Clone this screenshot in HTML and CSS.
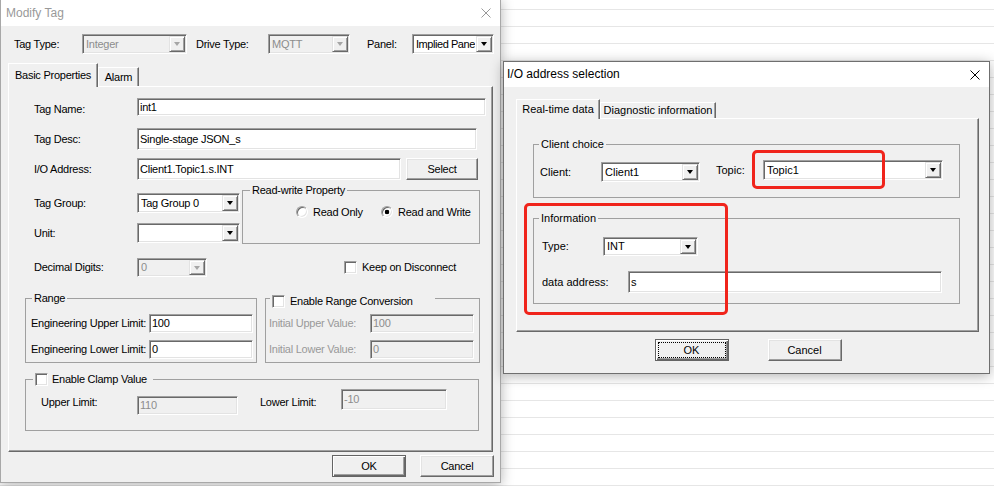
FILE: index.html
```html
<!DOCTYPE html>
<html lang="en">
<head>
    <meta charset="UTF-8">
    <meta name="viewport" content="width=device-width, initial-scale=1.0">
    <title>Modify Tag</title>
    <link rel="stylesheet" href="styles.css">
</head>
<body>
    <div class="window inactive" id="modify-tag">
        <div class="titlebar">
            <span class="title">Modify Tag</span>
            <svg class="close" width="10" height="10" viewBox="0 0 10 10"><path d="M0.5 0.5L9.5 9.5M9.5 0.5L0.5 9.5"/></svg>
        </div>

        <div class="typebar">
            <label class="lbl-type">Tag Type:</label>
            <div class="combo disabled cb-type"><span class="val">Integer</span><span class="drop"><i></i></span></div>
            <label class="lbl-drive">Drive Type:</label>
            <div class="combo disabled cb-drive"><span class="val">MQTT</span><span class="drop"><i></i></span></div>
            <label class="lbl-panel">Panel:</label>
            <div class="combo cb-panel"><span class="val">Implied Pane</span><span class="drop"><i></i></span></div>
        </div>

        <div class="tabs tabs-tag">
            <div class="tab active tab-basic">Basic Properties</div>
            <div class="tab tab-alarm">Alarm</div>
        </div>
        <div class="tabpanel panel-basic">
            <div class="frow r-name">
                <label>Tag Name:</label>
                <div class="edit e-name">int1</div>
            </div>
            <div class="frow r-desc">
                <label>Tag Desc:</label>
                <div class="edit e-desc">Single-stage JSON_s</div>
            </div>
            <div class="frow r-addr">
                <label>I/O Address:</label>
                <div class="edit e-addr">Client1.Topic1.s.INT</div>
                <button class="btn b-select">Select</button>
            </div>

            <div class="mid">
                <div class="mid-left">
                    <div class="frow">
                        <label>Tag Group:</label>
                        <div class="combo cb-group"><span class="val">Tag Group 0</span><span class="drop"><i></i></span></div>
                    </div>
                    <div class="frow">
                        <label>Unit:</label>
                        <div class="combo cb-unit"><span class="val"></span><span class="drop"><i></i></span></div>
                    </div>
                </div>
                <fieldset class="group g-rw">
                    <legend>Read-write Property</legend>
                    <div class="radios">
                        <span class="opt o-ro"><span class="radio"></span>Read Only</span>
                        <span class="opt"><span class="radio on"></span>Read and Write</span>
                    </div>
                </fieldset>
            </div>

            <div class="frow r-digits">
                <label>Decimal Digits:</label>
                <div class="combo disabled cb-digits"><span class="val">0</span><span class="drop"><i></i></span></div>
                <span class="opt o-keep"><span class="check"></span>Keep on Disconnect</span>
            </div>

            <div class="ranges">
                <fieldset class="group g-range">
                    <legend>Range</legend>
                    <div class="lrow first">
                        <label>Engineering Upper Limit:</label>
                        <div class="edit">100</div>
                    </div>
                    <div class="lrow">
                        <label>Engineering Lower Limit:</label>
                        <div class="edit">0</div>
                    </div>
                </fieldset>
                <fieldset class="group g-conv">
                    <legend><span class="check"></span>Enable Range Conversion</legend>
                    <div class="lrow first">
                        <label>Initial Upper Value:</label>
                        <div class="edit disabled">100</div>
                    </div>
                    <div class="lrow">
                        <label>Initial Lower Value:</label>
                        <div class="edit disabled">0</div>
                    </div>
                </fieldset>
            </div>

            <fieldset class="group g-clamp">
                <legend><span class="check"></span>Enable Clamp Value</legend>
                <div class="clamp-row">
                    <label class="l-upper">Upper Limit:</label>
                    <div class="edit disabled e-upper">110</div>
                    <label class="l-lower">Lower Limit:</label>
                    <div class="edit disabled e-lower">-10</div>
                </div>
            </fieldset>
        </div>

        <div class="buttons buttons-tag">
            <button class="btn default">OK</button>
            <button class="btn">Cancel</button>
        </div>
    </div>

    <div class="window" id="io-select">
        <div class="titlebar">
            <span class="title">I/O address selection</span>
            <svg class="close" width="10" height="10" viewBox="0 0 10 10"><path d="M0.5 0.5L9.5 9.5M9.5 0.5L0.5 9.5"/></svg>
        </div>

        <div class="tabs tabs-io">
            <div class="tab active tab-rt">Real-time data</div>
            <div class="tab tab-diag">Diagnostic information</div>
        </div>
        <div class="tabpanel panel-io">
            <fieldset class="group g-client">
                <legend>Client choice</legend>
                <div class="client-row">
                    <label class="l-client">Client:</label>
                    <div class="combo cb-client"><span class="val">Client1</span><span class="drop"><i></i></span></div>
                    <label class="l-topic">Topic:</label>
                    <div class="combo cb-topic"><span class="val">Topic1</span><span class="drop"><i></i></span></div>
                </div>
            </fieldset>
            <fieldset class="group g-info">
                <legend>Information</legend>
                <div class="info-row r-type">
                    <label class="l-type">Type:</label>
                    <div class="combo cb-datatype"><span class="val">INT</span><span class="drop"><i></i></span></div>
                </div>
                <div class="info-row r-data">
                    <label class="l-data">data address:</label>
                    <div class="edit e-data">s</div>
                </div>
            </fieldset>
        </div>

        <div class="buttons buttons-io">
            <button class="btn default focused">OK</button>
            <button class="btn">Cancel</button>
        </div>
    </div>

    <div class="mark mark-topic"></div>
    <div class="mark mark-info"></div>
</body>
</html>
```

FILE: styles.css
```css
* {
    box-sizing: border-box;
}

html, body {
    margin: 0;
    padding: 0;
}

body {
    position: relative;
    width: 994px;
    height: 486px;
    overflow: hidden;
    font-family: "Liberation Sans", Arial, sans-serif;
    font-size: 11px;
    line-height: 13px;
    color: #000;
    background: repeating-linear-gradient(to bottom, #fff 0, #fff 9px, #e6e6e6 9px, #e6e6e6 10px, #fff 10px, #fff 17px);
}

label {
    display: block;
    flex: none;
    white-space: nowrap;
}

/* windows */

.window {
    position: absolute;
    display: flex;
    flex-direction: column;
    background: #f0f0f0;
    border: 1px solid #6f6f6f;
    box-shadow: 0 2px 12px rgba(0, 0, 0, 0.3);
}

.window.inactive {
    border-color: #a8a8a8;
}

#modify-tag {
    left: 0;
    top: -1px;
    width: 501px;
    height: 484px;
    letter-spacing: -0.25px;
}

#io-select {
    left: 503px;
    top: 61px;
    width: 487px;
    height: 313px;
}

.titlebar {
    flex: none;
    height: 26px;
    display: flex;
    align-items: center;
    justify-content: space-between;
    padding: 0 9px 0 5px;
    background: #fff;
    font-size: 12px;
    letter-spacing: 0;
}

#io-select .titlebar {
    height: 25px;
    padding-left: 3px;
}

.close path {
    fill: none;
    stroke: #000;
    stroke-width: 1;
}

.inactive .title {
    color: #999;
}

.inactive .close path {
    stroke: #999;
}

/* classic controls */

.edit, .combo, .check, .radio {
    flex: none;
    background: #fff;
    border: 1px solid;
    border-color: #a0a0a0 #fff #fff #a0a0a0;
    box-shadow: inset 1px 1px 0 #696969, inset -1px -1px 0 #e3e3e3;
}

.edit {
    display: flex;
    align-items: center;
    padding: 0 2px;
    white-space: nowrap;
    overflow: hidden;
}

.edit.disabled, .combo.disabled {
    background: #f0f0f0;
    color: #8d8d8d;
}

.combo {
    display: flex;
    align-items: stretch;
    height: 20px;
    padding-left: 3px;
}

.combo .val {
    flex: 1;
    display: flex;
    align-items: center;
    overflow: hidden;
    white-space: nowrap;
}

.drop {
    flex: none;
    width: 16px;
    margin: 1px;
    display: flex;
    align-items: center;
    justify-content: center;
    background: #f0f0f0;
    border: 1px solid;
    border-color: #e3e3e3 #696969 #696969 #e3e3e3;
    box-shadow: inset 1px 1px 0 #fff, inset -1px -1px 0 #a0a0a0;
}

.drop i {
    width: 0;
    height: 0;
    border-top: 4px solid #000;
    border-left: 3.5px solid transparent;
    border-right: 3.5px solid transparent;
}

.disabled .drop i {
    border-top-color: #a6a6a6;
}

.check {
    width: 13px;
    height: 13px;
}

.radio {
    width: 12px;
    height: 12px;
    border-radius: 50%;
}

.radio.on {
    background: radial-gradient(circle, #000 0, #000 2px, #fff 2.6px);
}

.opt {
    flex: none;
    display: flex;
    align-items: center;
    gap: 5px;
    white-space: nowrap;
}

.btn {
    flex: none;
    width: 74px;
    height: 22px;
    padding: 0;
    font: inherit;
    letter-spacing: inherit;
    color: #000;
    background: #f0f0f0;
    border: 1px solid;
    border-color: #fff #696969 #696969 #fff;
    box-shadow: inset -1px -1px 0 #a0a0a0, inset 1px 1px 0 #e3e3e3;
}

.btn.default {
    border-color: #646464;
    box-shadow: inset 1px 1px 0 #fff, inset -1px -1px 0 #696969, inset -2px -2px 0 #a0a0a0;
}

.btn.focused {
    outline: 1px dotted #000;
    outline-offset: -4px;
}

.tabs {
    flex: none;
    position: relative;
    z-index: 1;
    display: flex;
    align-items: flex-end;
}

.tab {
    flex: none;
    display: flex;
    align-items: center;
    justify-content: center;
    height: 19px;
    background: #f0f0f0;
    border: 1px solid;
    border-bottom: 0;
    border-color: #fff #696969 #696969 #fff;
    box-shadow: inset -1px 0 0 #a0a0a0;
    white-space: nowrap;
}

.tab.active {
    margin-bottom: -1px;
}

.tabpanel {
    flex: none;
    border: 1px solid;
    border-color: #fff #696969 #696969 #fff;
    box-shadow: inset -1px -1px 0 #a0a0a0;
}

.group {
    flex: none;
    margin: 0;
    padding: 0;
    min-width: 0;
    border: 1px solid #a0a0a0;
}

.group legend {
    padding: 0 2px;
    line-height: 13px;
}

.buttons {
    flex: none;
    display: flex;
}

/* Modify Tag */

.typebar {
    flex: none;
    display: flex;
    align-items: center;
    height: 20px;
    margin: 8px 0 0 13px;
}

.lbl-type { width: 68px; }
.cb-type { width: 105px; }
.lbl-drive { width: 72px; margin-left: 9px; }
.cb-drive { width: 82px; }
.lbl-panel { width: 45px; margin-left: 17px; }
.cb-panel { width: 82px; }
.cb-panel .val { letter-spacing: -0.45px; }

.tabs-tag {
    margin: 9px 0 0 7px;
}

.tab-basic { width: 90px; height: 24px; }
.tab-alarm { width: 41px; }

.panel-basic {
    margin-left: 7px;
    width: 485px;
    height: 366px;
    padding-left: 16px;
}

.frow {
    display: flex;
    align-items: center;
    margin-left: 9px;
}

.frow label {
    width: 103px;
}

.r-name {
    margin-top: 11px;
    height: 18px;
    align-items: flex-end;
}

.e-name { width: 349px; height: 18px; }

.r-desc { margin-top: 12px; height: 22px; }
.e-desc { width: 340px; height: 22px; }

.r-addr { margin-top: 8px; height: 22px; }
.e-addr { width: 264px; height: 22px; }
.b-select { width: 72px; margin-left: 5px; }

.mid {
    display: flex;
    height: 60px;
    margin: 4px 0 0 9px;
}

.mid-left {
    display: flex;
    flex-direction: column;
    gap: 10px;
    padding-top: 9px;
}

.mid-left .frow {
    margin-left: 0;
    height: 20px;
}

.cb-group, .cb-unit { width: 103px; }

.g-rw {
    width: 238px;
    height: 60px;
    margin-left: 2px;
}

.g-rw legend { margin-left: 7px; }

.radios {
    display: flex;
    align-items: center;
    height: 12px;
    margin-top: 9px;
    padding-left: 53px;
}

.o-ro { width: 85px; }

.r-digits { margin-top: 14px; height: 19px; }
.cb-digits { width: 70px; height: 19px; }
.o-keep { margin-left: 137px; }

.ranges {
    display: flex;
    align-items: flex-start;
    margin-top: 15px;
}

.lrow {
    display: flex;
    align-items: center;
    height: 19px;
    margin-top: 7px;
}

.lrow .edit {
    width: 104px;
    height: 19px;
}

.g-range {
    width: 232px;
    height: 71px;
}

.g-range legend { margin-left: 6px; }
.g-range .lrow { padding-left: 5px; }
.g-range .lrow.first { margin-top: 9px; }
.g-range label { width: 118px; }

.g-conv {
    width: 215px;
    height: 74px;
    margin: -3px 0 0 8px;
}

.g-conv legend {
    display: flex;
    align-items: center;
    gap: 5px;
    width: 165px;
    margin-left: 4px;
    padding: 6px 0 0 2px;
}

.g-conv .lrow { padding-left: 3px; }
.g-conv .lrow.first { margin-top: 6px; }
.g-conv label { width: 101px; color: #999; }

.g-clamp {
    width: 454px;
    height: 58px;
    margin-top: 10px;
}

.g-clamp legend {
    display: flex;
    align-items: center;
    gap: 4px;
    margin-left: 7px;
    padding: 0 6px 0 2px;
}

.clamp-row {
    display: flex;
    align-items: flex-start;
    padding-left: 15px;
}

.l-upper { width: 96px; margin-top: 10px; }
.e-upper { width: 101px; height: 19px; margin-top: 10px; }
.l-lower { width: 81px; margin: 10px 0 0 22px; }
.e-lower { width: 106px; height: 21px; margin-top: 3px; }

.buttons-tag {
    justify-content: flex-end;
    gap: 14px;
    margin-top: 3px;
    padding-right: 6px;
}

/* I/O address selection */

.tabs-io {
    margin: 12px 0 0 12px;
}

.tab-rt { width: 84px; height: 20px; }
.tab-diag { width: 116px; height: 16px; }

.panel-io {
    margin-left: 12px;
    width: 463px;
    height: 214px;
    padding-left: 16px;
}

.g-client {
    width: 427px;
    height: 60px;
    margin-top: 19px;
}

.g-client legend, .g-info legend { margin-left: 5px; }

.client-row {
    display: flex;
    align-items: flex-start;
    padding-left: 6px;
}

.l-client { width: 61px; margin-top: 15px; }
.cb-client { width: 99px; margin-top: 11px; }
.l-topic { width: 47px; margin: 13px 0 0 16px; }
.cb-topic { width: 180px; margin-top: 9px; }

.g-info {
    width: 427px;
    height: 92px;
    margin-top: 14px;
}

.info-row {
    display: flex;
    align-items: center;
    padding-left: 8px;
}

.r-type { height: 19px; margin-top: 12px; }
.l-type { width: 61px; }
.cb-datatype { width: 95px; height: 19px; }

.r-data { height: 22px; margin-top: 15px; }
.l-data { width: 86px; }
.e-data { width: 314px; height: 22px; }

.buttons-io {
    justify-content: center;
    gap: 39px;
    margin-top: 7px;
    padding-left: 3px;
}

/* red annotation frames */

.mark {
    position: absolute;
    border: 3px solid #f0241b;
    border-radius: 5px;
}

.mark-topic {
    left: 752px;
    top: 150px;
    width: 133px;
    height: 39px;
}

.mark-info {
    left: 524px;
    top: 203px;
    width: 204px;
    height: 112px;
}
```
